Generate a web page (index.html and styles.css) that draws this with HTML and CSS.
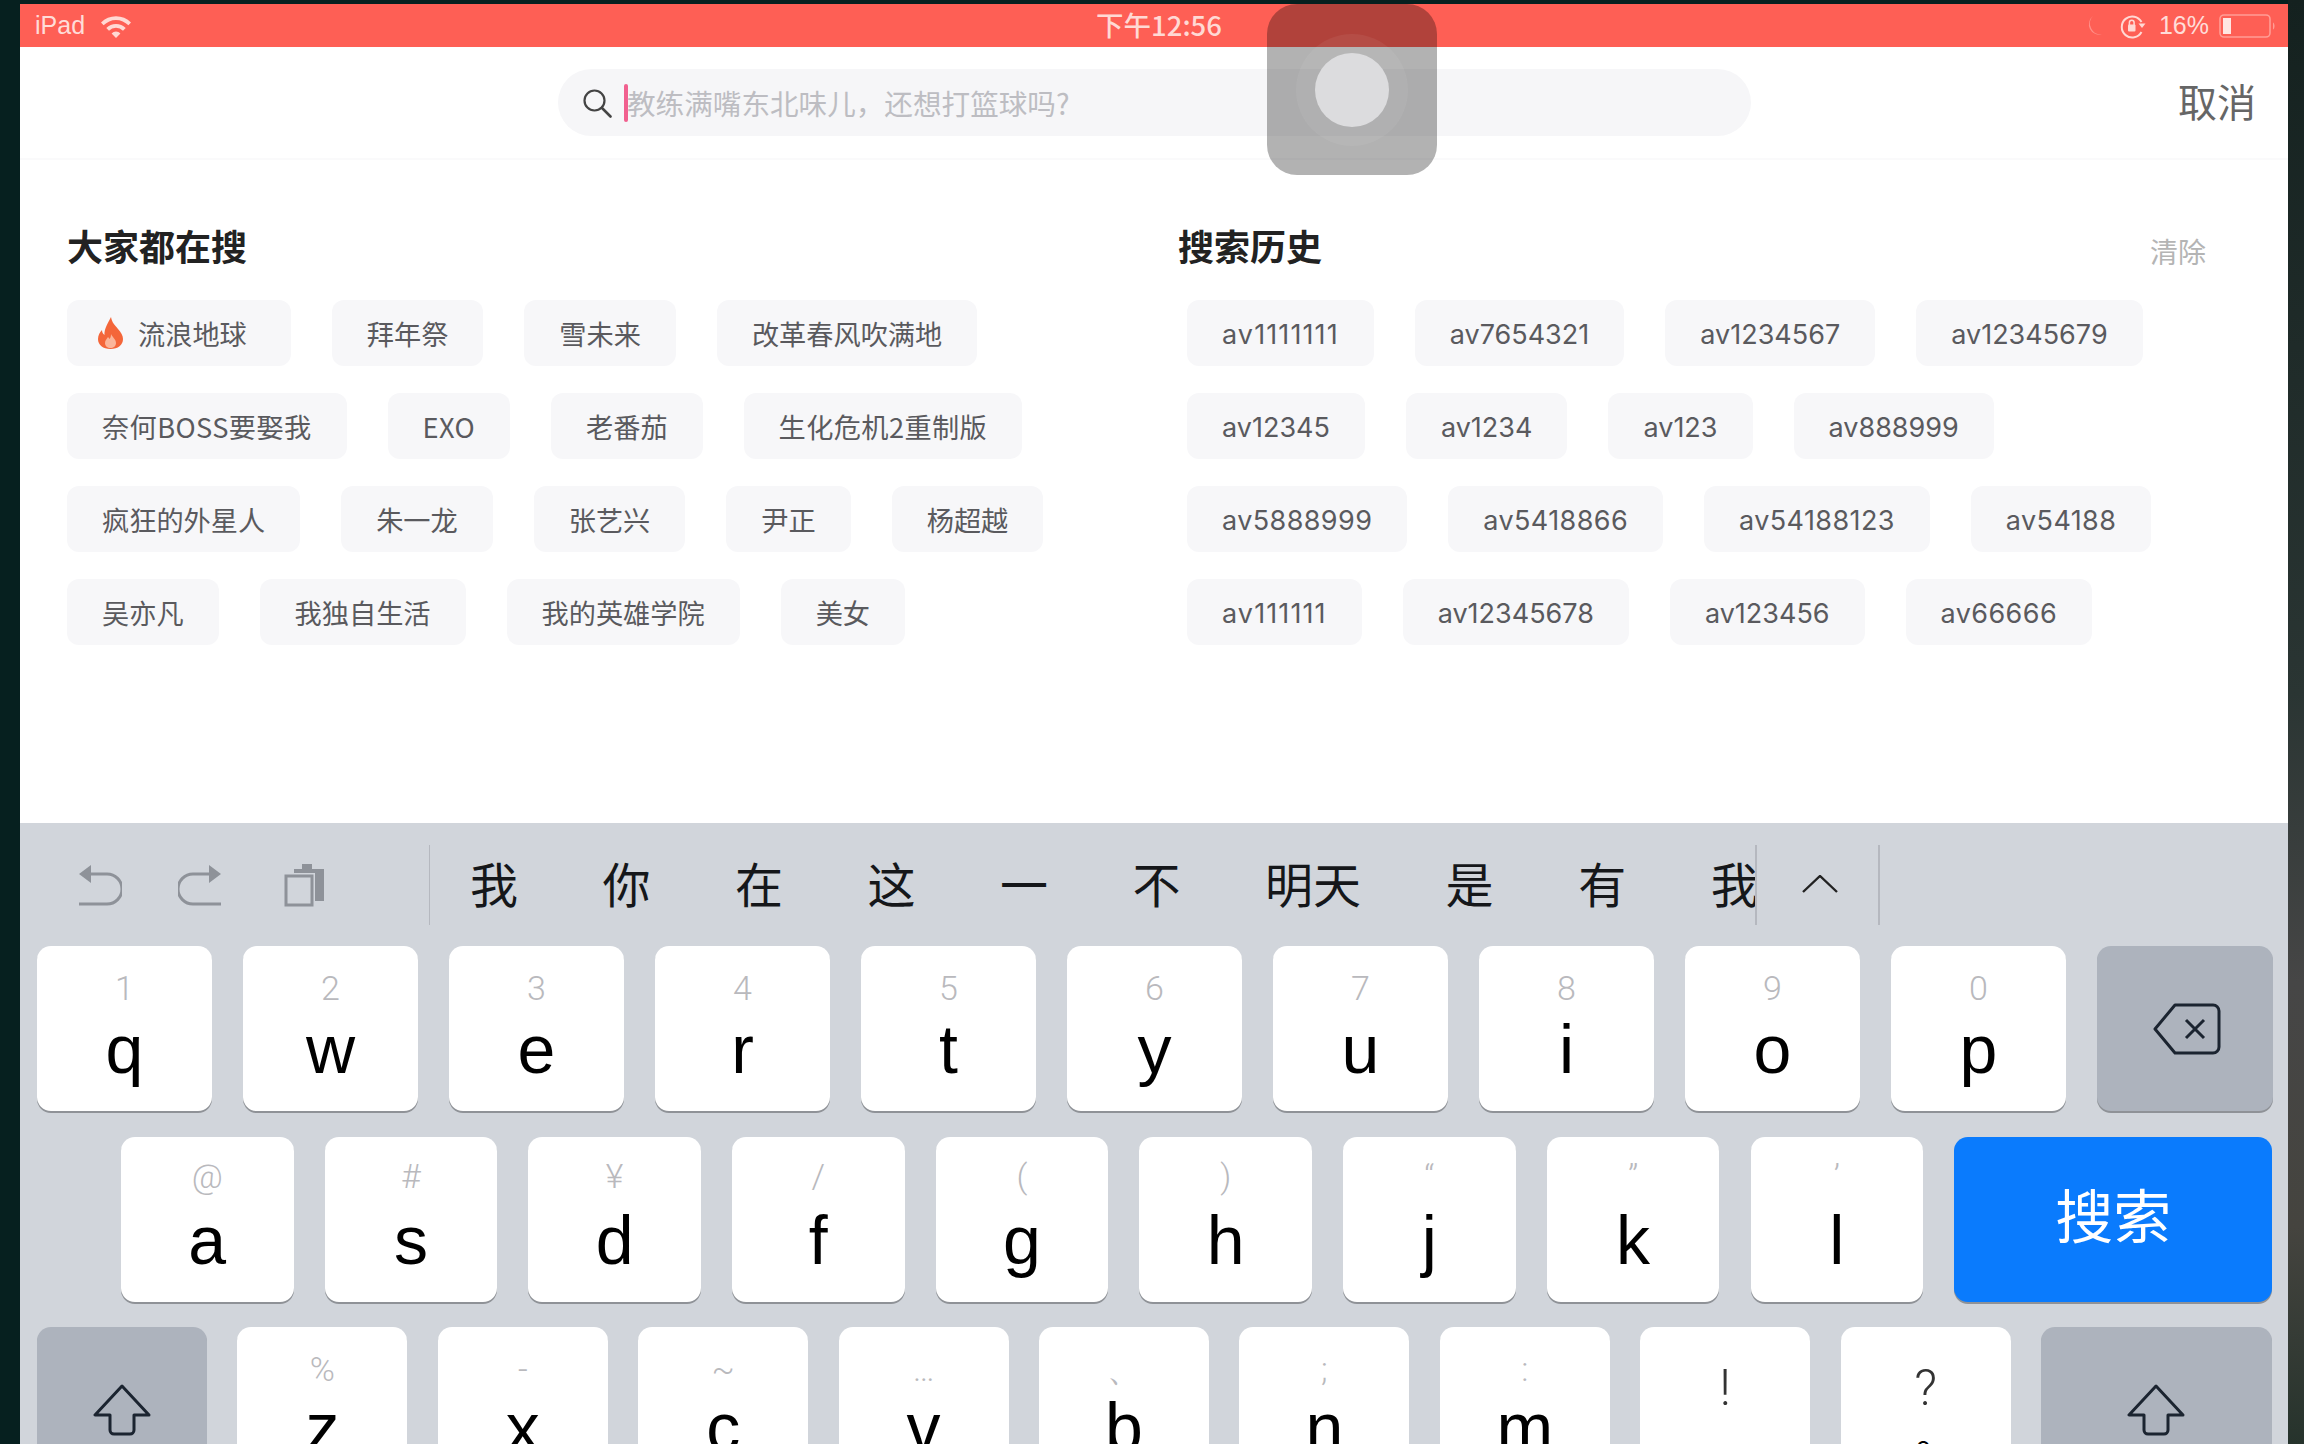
FILE: index.html
```html
<!DOCTYPE html>
<html lang="zh">
<head>
<meta charset="utf-8">
<title>搜索</title>
<link rel="stylesheet" href="styles.css">
</head>
<body>
<div class="screen">
  <header class="status">
    <div class="status-left">
      <span>iPad</span>
      <svg class="wifi" viewBox="0 0 32 24"><path d="M1 8.500a21 21 0 0 1 30 0l-2.600 2.800a17.200 17.200 0 0 0-24.800 0z" fill="#ffd9d4"/><path d="M6.300 14a13.500 13.500 0 0 1 19.400 0l-2.700 2.800a9.600 9.600 0 0 0-14 0z" fill="#ffd9d4"/><path d="M11.600 19.400a6 6 0 0 1 8.800 0L16 24z" fill="#ffd9d4"/></svg>
    </div>
    <div class="status-time">下午12:56</div>
    <div class="status-right">
      <svg class="moon" viewBox="0 0 18 22"><path d="M8 1a10.500 10.500 0 0 0 9 18.500A11 11 0 0 1 8 1z" fill="#ff9089"/></svg>
      <svg class="lock" viewBox="0 0 28 26"><path d="M22.500 9A10.500 10.500 0 1 0 22.500 19" fill="none" stroke="#ffd9d4" stroke-width="2"/><path d="M19.500 10.500h7L23 15z" fill="#ffd9d4"/><rect x="9" y="11.500" width="7.500" height="7" rx="1" fill="#ffd9d4"/><path d="M10.400 12V9.500a2.350 2.350 0 0 1 4.700 0V12" fill="none" stroke="#ffd9d4" stroke-width="1.500"/></svg>
      <span>16%</span>
      <svg class="battery" viewBox="0 0 58 24"><rect x="1" y="1" width="50" height="22" rx="4" fill="none" stroke="#ff9d95" stroke-width="1.600"/><rect x="4" y="4" width="8" height="16" fill="#ffe6e2"/><path d="M54 8.500c2 1 2 6 0 7z" fill="#ff9d95"/></svg>
    </div>
  </header>

  <section class="searchbar">
    <div class="searchbox">
      <svg class="search-icon" viewBox="0 0 30 30"><circle cx="12.500" cy="12.500" r="10" fill="none" stroke="#444" stroke-width="2.200"/><path d="M20 20l8.500 8.500" stroke="#444" stroke-width="2.600" stroke-linecap="round"/></svg>
      <i class="caret"></i>
      <span class="placeholder">教练满嘴东北味儿，还想打篮球吗?</span>
    </div>
    <span class="cancel">取消</span>
  </section>

  <main class="lists">
    <section class="col col-hot">
      <div class="col-head"><h2>大家都在搜</h2></div>
      <div class="chips">
        <div class="chip-row">
          <span class="chip chip-hot"><svg class="flame" viewBox="0 0 27 32"><path d="M14 0c1 6 4 8 7 12 3 3 5 7 5 10 0 6-5 10-12.500 10S1 28 1 22c0-4 2-7 4-9 0 2 1 4 2.500 5C7 12 11 6 14 0z" fill="#f4663a"/><path d="M14 17c1 3 5 5 5 9 0 3-2.500 5-5.500 5S8 29 8 26c0-3 2-4 3-6 1 1 1.500 2 1.500 2 1-1 1.500-3 1.500-5z" fill="#fbb59a"/></svg>流浪地球</span>
          <span class="chip">拜年祭</span><span class="chip">雪未来</span><span class="chip">改革春风吹满地</span>
        </div>
        <div class="chip-row">
          <span class="chip chip-wide">奈何BOSS要娶我</span><span class="chip chip-wide">EXO</span><span class="chip">老番茄</span><span class="chip chip-wide">生化危机2重制版</span>
        </div>
        <div class="chip-row">
          <span class="chip">疯狂的外星人</span><span class="chip">朱一龙</span><span class="chip">张艺兴</span><span class="chip">尹正</span><span class="chip">杨超越</span>
        </div>
        <div class="chip-row">
          <span class="chip">吴亦凡</span><span class="chip">我独自生活</span><span class="chip">我的英雄学院</span><span class="chip">美女</span>
        </div>
      </div>
    </section>
    <section class="col col-history">
      <div class="col-head"><h2>搜索历史</h2><span class="clear">清除</span></div>
      <div class="chips chips-latin">
        <div class="chip-row">
          <span class="chip chip-ones">av1111111</span><span class="chip">av7654321</span><span class="chip">av1234567</span><span class="chip">av12345679</span>
        </div>
        <div class="chip-row">
          <span class="chip">av12345</span><span class="chip">av1234</span><span class="chip">av123</span><span class="chip">av888999</span>
        </div>
        <div class="chip-row">
          <span class="chip chip-wide">av5888999</span><span class="chip chip-wide">av5418866</span><span class="chip chip-wide">av54188123</span><span class="chip chip-wide">av54188</span>
        </div>
        <div class="chip-row">
          <span class="chip chip-ones">av111111</span><span class="chip">av12345678</span><span class="chip">av123456</span><span class="chip chip-wide">av66666</span>
        </div>
      </div>
    </section>
  </main>

  <section class="keyboard">
    <div class="toolbar">
      <div class="tools">
        <svg class="tool" viewBox="0 0 46 42"><path d="M3 10 15 1v18z" fill="#8e9299"/><path d="M13 10h18a13 13 0 0 1 0 30H3" fill="none" stroke="#8e9299" stroke-width="3"/></svg>
        <svg class="tool" viewBox="0 0 46 42"><path d="M43 10 31 1v18z" fill="#8e9299"/><path d="M33 10H15a13 13 0 0 0 0 30h28" fill="none" stroke="#8e9299" stroke-width="3"/></svg>
        <svg class="tool tool-clip" viewBox="0 0 42 44"><rect x="2" y="13" width="26" height="29" fill="none" stroke="#8e9299" stroke-width="3"/><path d="M10 10V6h8V1h10v5h12v32h-9V10z" fill="#8e9299"/></svg>
      </div>
      <div class="candidates">
        <span>我</span><span>你</span><span>在</span><span>这</span><span>一</span><span>不</span><span>明天</span><span>是</span><span>有</span><span>我</span>
      </div>
      <div class="expand">
        <svg viewBox="0 0 36 18"><path d="M1 17 18 1l17 16" fill="none" stroke="#222" stroke-width="2.400"/></svg>
      </div>
    </div>

    <div class="key-row row-1">
      <div class="key"><small>1</small><b>q</b></div>
      <div class="key"><small>2</small><b>w</b></div>
      <div class="key"><small>3</small><b>e</b></div>
      <div class="key"><small>4</small><b>r</b></div>
      <div class="key"><small>5</small><b>t</b></div>
      <div class="key"><small>6</small><b>y</b></div>
      <div class="key"><small>7</small><b>u</b></div>
      <div class="key"><small>8</small><b>i</b></div>
      <div class="key"><small>9</small><b>o</b></div>
      <div class="key"><small>0</small><b>p</b></div>
      <div class="key key-fn">
        <svg class="del" viewBox="0 0 68 52"><path d="M22 2h38a6 6 0 0 1 6 6v36a6 6 0 0 1-6 6H22L2 26z" fill="none" stroke="#1b2430" stroke-width="3" stroke-linejoin="round"/><path d="M33 17l18 18M51 17 33 35" stroke="#1b2430" stroke-width="3"/></svg>
      </div>
    </div>

    <div class="key-row row-2">
      <div class="key"><small>@</small><b>a</b></div>
      <div class="key"><small>#</small><b>s</b></div>
      <div class="key"><small>¥</small><b>d</b></div>
      <div class="key"><small>/</small><b>f</b></div>
      <div class="key"><small>(</small><b>g</b></div>
      <div class="key"><small>)</small><b>h</b></div>
      <div class="key"><small>“</small><b>j</b></div>
      <div class="key"><small>”</small><b>k</b></div>
      <div class="key"><small>’</small><b>l</b></div>
      <div class="key key-go">搜索</div>
    </div>

    <div class="key-row row-3">
      <div class="key key-fn key-shift"><svg class="shift" viewBox="0 0 60 52"><path d="M30 2 3 31h15v15a4 4 0 0 0 4 4h16a4 4 0 0 0 4-4V31h15z" fill="none" stroke="#1b2430" stroke-width="3" stroke-linejoin="round"/></svg></div>
      <div class="key"><small>%</small><b>z</b></div>
      <div class="key"><small>-</small><b>x</b></div>
      <div class="key"><small>~</small><b>c</b></div>
      <div class="key"><small>…</small><b>v</b></div>
      <div class="key"><small>、</small><b>b</b></div>
      <div class="key"><small>;</small><b>n</b></div>
      <div class="key"><small>:</small><b>m</b></div>
      <div class="key key-punct"><small>!</small><b>,</b></div>
      <div class="key key-punct key-circle"><small>?</small><b>。</b></div>
      <div class="key key-fn key-shift-r"><svg class="shift" viewBox="0 0 60 52"><path d="M30 2 3 31h15v15a4 4 0 0 0 4 4h16a4 4 0 0 0 4-4V31h15z" fill="none" stroke="#1b2430" stroke-width="3" stroke-linejoin="round"/></svg></div>
    </div>
  </section>

  <div class="assist"><div class="assist-ring"><div class="assist-core"></div></div></div>
</div>
</body>
</html>
```

FILE: styles.css
```css
* { box-sizing: border-box; }
html, body { margin: 0; height: 100%; }
body {
  width: 2304px;
  height: 1444px;
  overflow: hidden;
  background:
    linear-gradient(180deg, #14211f 0%, #2a3533 48%, #464646 68%, #45443f 85%, #26332c 100%) right top / 16px 100% no-repeat,
    #06201f;
  padding: 4px 16px 0 20px;
  font-family: "Noto Sans CJK SC", "Noto Sans", sans-serif;
}
.screen {
  position: relative;
  width: 2268px;
  height: 1440px;
  background: #fff;
  overflow: hidden;
}
.status {
  height: 43px;
  background: #fe5f55;
  color: #ffdcd8;
  font-size: 25px;
  display: grid;
  grid-template-columns: 1fr auto 1fr;
  align-items: center;
  padding: 0 11px 0 15px;
  font-family: "Liberation Sans", sans-serif;
}
.status-left, .status-right { display: flex; align-items: center; }
.status-left { gap: 15px; }
.status-right { justify-content: flex-end; gap: 10px; }
.wifi { width: 32px; height: 24px; }
.moon { width: 18px; height: 22px; margin-right: 6px; }
.lock { width: 28px; height: 26px; margin-right: 2px; }
.battery { width: 58px; height: 24px; }
.status-time {
  font-family: "Noto Sans CJK SC", sans-serif;
  font-size: 27.500px;
  font-weight: 500;
  line-height: 40px;
  padding-bottom: 3px;
  color: #ffd9d4;
  margin-left: 6px;
}
.searchbar {
  position: relative;
  height: 113px;
  padding-top: 22px;
  padding-left: 538px;
  border-bottom: 2px solid #fafafb;
}
.searchbox {
  width: 1193px;
  height: 67px;
  border-radius: 34px;
  background: #f6f6f8;
  display: flex;
  align-items: center;
  padding-left: 24px;
}
.search-icon { width: 30px; height: 30px; margin-right: 12px; }
.caret { width: 4px; height: 38px; background: #f1608f; border-radius: 2px; flex: none; }
.placeholder { font-size: 28.600px; color: #bdbdc2; margin-left: -1px; }
.cancel {
  position: absolute;
  right: 32px;
  top: 21px;
  font-size: 39px;
  line-height: 64px;
  color: #666;
}
.lists {
  height: 663px;
  padding: 57px 0 0 47px;
  display: flex;
}
.col-hot { width: 1111px; }
.col-history { width: 1040px; }
.col-head {
  height: 56px;
  display: flex;
  align-items: center;
  justify-content: space-between;
  margin-bottom: 27px;
}
.col-history .col-head { padding-right: 12px; }
.col-head h2 {
  margin: 0;
  font-size: 36px;
  font-weight: 700;
  line-height: 56px;
  color: #222;
}
.clear { font-size: 28px; color: #b4b4b4; padding-top: 12px; }
.chips { display: flex; flex-direction: column; gap: 27px; }
.chips-latin { padding-left: 9px; }
.chip-row { display: flex; gap: 41px; }
.chip {
  height: 66px;
  padding: 0 35px;
  border-radius: 12px;
  background: #f7f7f9;
  color: #5a5a5e;
  font-size: 27.200px;
  line-height: 66px;
  white-space: nowrap;
  display: flex;
  align-items: center;
}
.chip-hot { padding: 0 44px 0 30px; }
.chip-wide { letter-spacing: .4px; }
.flame { width: 27px; height: 32px; margin-right: 14px; }
.chips-latin .chip { font-family: Inter, sans-serif; font-size: 27px; padding: 3px 35px 0; }
.chips-latin .chip-ones { letter-spacing: 1.100px; }
.keyboard {
  height: 621px;
  background: #d1d5db;
  padding: 0 16px 0 17px;
  overflow: hidden;
}
.toolbar {
  height: 123px;
  display: flex;
  align-items: center;
  position: relative;
}
.tools {
  width: 393px;
  height: 80px;
  padding-left: 39px;
  display: flex;
  gap: 56px;
  align-items: center;
  border-right: 1px solid #b5b8bf;
}
.tool { width: 46px; height: 42px; flex: none; }
.tool-clip { width: 42px; height: 44px; margin-left: 4px; }
.candidates {
  width: 1327px;
  height: 80px;
  padding: 0 0 6px 40px;
  display: flex;
  gap: 84.500px;
  overflow: hidden;
  white-space: nowrap;
  align-items: center;
  font-size: 48px;
  line-height: 60px;
  color: #15171a;
  border-right: 2px solid #b5b8bf;
}
.expand {
  width: 123px;
  height: 80px;
  padding: 0 0 2px 5px;
  display: flex;
  align-items: center;
  justify-content: center;
  border-right: 2px solid #b5b8bf;
}
.expand svg { width: 36px; height: 18px; }
.key-row { display: flex; }
.key {
  position: relative;
  height: 165px;
  background: #fff;
  border-radius: 14px;
  box-shadow: 0 2px 0 #8f9297;
  flex: none;
  display: flex;
  flex-direction: column;
  align-items: center;
  color: #000;
}
.key small {
  font-family: Roboto, "Liberation Sans", sans-serif;
  font-weight: 300;
  font-size: 34px;
  line-height: 40px;
  color: #b9b9bd;
  margin-top: 22px;
}
.key b {
  font-family: "Liberation Sans", sans-serif;
  font-weight: 400;
  font-size: 68px;
  line-height: 76px;
  margin-top: 3px;
}
.row-1 { gap: 31px; height: 191px; }
.row-1 .key { width: 175px; }
.row-2 { gap: 31.200px; height: 190px; padding-left: 84px; }
.row-2 .key { width: 172.500px; }
.row-2 .key small { margin-top: 19px; }
.row-2 .key b { margin-top: 6px; }
.row-3 { gap: 30.400px; }
.row-3 .key { width: 170px; height: 170px; }
.row-3 .key b { margin-top: 0; }
.key-fn { background: #adb3bd; justify-content: center; box-shadow: 0 2px 0 #8f9297; }
.row-2 .key-go {
  background: #0a7bfd;
  color: #fff;
  width: 318px;
  font-size: 58px;
  line-height: 60px;
  padding-bottom: 14px;
  justify-content: center;
}
.row-1 .key-fn { width: 176px; }
.del { width: 68px; height: 52px; margin-left: 4px; }
.row-3 .key-shift { justify-content: flex-start; }
.row-3 .key-shift-r { width: 231px; justify-content: flex-start; }
.shift { width: 60px; height: 52px; margin-top: 57px; }
.row-3 .key-punct small { color: #333; font-size: 50px; line-height: 50px; margin-top: 36px; }
.row-3 .key-punct b { font-family: "Noto Sans CJK SC", sans-serif; font-size: 40px; line-height: 40px; margin-top: 0; }
.row-3 .key-circle b { margin-left: 20px; }
.assist {
  position: absolute;
  left: 1247px;
  top: 0;
  width: 170px;
  height: 171px;
  border-radius: 30px;
  background: rgba(0, 0, 0, .3);
  display: flex;
  align-items: center;
  justify-content: center;
}
.assist-ring {
  width: 112px;
  height: 112px;
  border-radius: 50%;
  background: rgba(255, 255, 255, .06);
  display: flex;
  align-items: center;
  justify-content: center;
}
.assist-core {
  width: 74px;
  height: 74px;
  border-radius: 50%;
  background: #dcdcde;
}
```
